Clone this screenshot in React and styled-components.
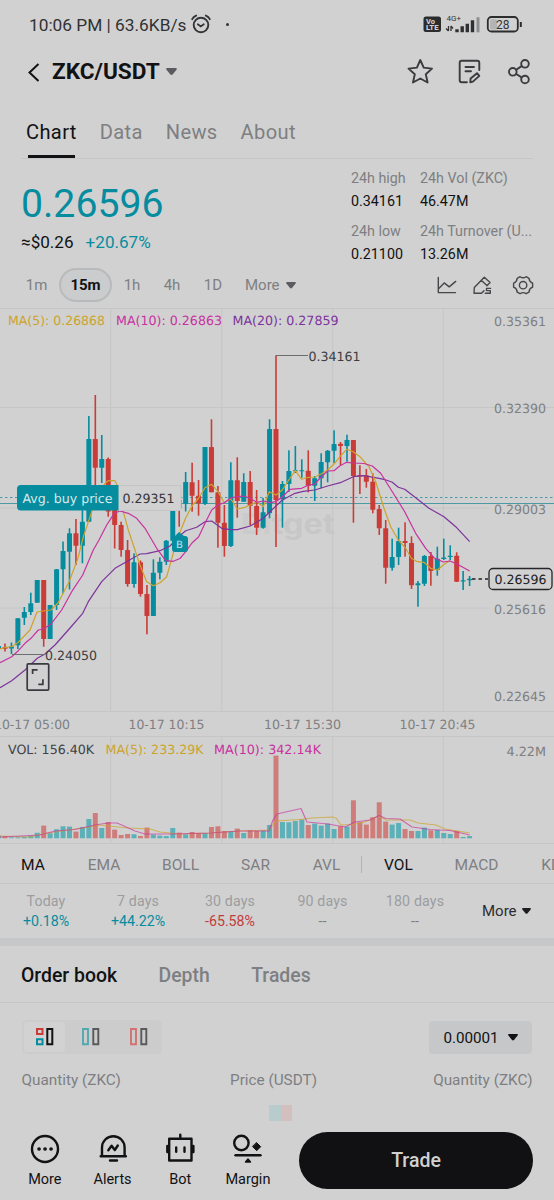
import styled, { createGlobalStyle } from 'styled-components';

const BG = '#d1d1d1';
const TEAL = '#068c9f';
const RED = '#ca3c37';
const GOLD = '#cda32c';
const PINK = '#c832a0';
const PURPLE = '#7c349c';
const MUTED = '#7e7f82';
const LINE = '#c6c6c7';

// [high, body top, body bottom, low, up?]
const CANDLES = [
  [644, 646, 649, 650, 1], [643.5, 647, 648.7, 651.5, 0], [642.5, 646.5, 648.5, 654, 1],
  [618, 618.3, 645.3, 649, 1], [607, 612, 617.7, 625, 1], [592.7, 603.3, 612, 615, 1],
  [580, 580, 602.7, 602.7, 1], [580, 580, 639, 646.7, 0], [605, 605, 639, 639, 1],
  [569, 569.3, 605, 610, 1], [541.5, 551, 569.3, 593.5, 1], [528.3, 533.3, 551.7, 589.5, 1],
  [519, 533.3, 545.7, 565, 0], [505, 521.7, 545.7, 563.3, 1], [416, 439, 521.7, 521.7, 1],
  [395, 439, 467.7, 490, 0], [435, 459, 467.7, 483, 1], [457.5, 459, 511.5, 516.7, 0],
  [510, 510, 525, 548.5, 0], [521.7, 525, 550, 556.7, 0], [540, 550, 584, 586.7, 0],
  [553.3, 562.3, 584, 587.7, 1], [560.5, 562.3, 594, 596.7, 0], [585, 594, 616, 634.3, 0],
  [559.3, 572.7, 616, 616, 1], [557.3, 561.7, 572.7, 579.3, 1], [540, 540.7, 561.7, 565, 1],
  [508, 510, 540.7, 544, 1], [490, 500, 508, 526.7, 0], [472, 482, 503.7, 511.5, 1],
  [462.7, 482.3, 495.7, 511.7, 0], [480, 495.7, 503.3, 515.7, 0], [447, 447, 504, 505, 1],
  [419.3, 447, 492.3, 492.3, 0], [486, 492.3, 522.7, 547.7, 0], [505, 522.7, 546, 556.7, 0],
  [462.3, 480.3, 546, 547, 1], [457.3, 480.3, 501, 517.7, 0], [473.3, 482, 501.7, 501.7, 1],
  [471, 482, 505.7, 525.7, 0], [490, 506, 527.7, 535, 0], [498, 512.3, 527.7, 528.7, 1],
  [419.3, 429, 513.3, 518.3, 1], [355.3, 429, 500, 547, 0], [481, 484, 499.3, 527.7, 1],
  [450.3, 471, 484, 492, 1], [446, 470.3, 471.3, 473, 1], [459.3, 470.3, 471.3, 477.7, 1],
  [450.3, 470.7, 485.7, 492.3, 0], [476, 478.3, 485.7, 501, 1], [453.3, 462, 478.3, 488.3, 1],
  [450, 450.7, 462.3, 482.3, 1], [430.3, 444, 450.7, 463.3, 1], [442, 443.7, 446, 465, 0],
  [434.7, 440, 446, 461.7, 1], [440, 440, 476, 522.7, 0], [465.3, 475, 476.5, 494, 0],
  [469, 475.3, 481.7, 487.7, 0], [473.3, 481.7, 509.7, 513.3, 0], [505, 509, 528.3, 535, 0],
  [520, 528.3, 567.7, 583.7, 0], [538.7, 557, 567.7, 570.7, 1], [527.7, 541, 557, 565, 1],
  [522.3, 541, 543, 556.7, 0], [536.3, 543, 585.3, 589, 0], [581, 583.3, 585.3, 606.7, 1],
  [555, 556, 583.7, 586, 1], [552, 556, 571, 585.7, 0], [546.7, 558.7, 570, 575.7, 1],
  [538.7, 557.5, 559, 560, 1], [545.3, 555.7, 557, 560, 1], [552.3, 555.7, 581.7, 582, 0],
  [571, 580.3, 581.5, 590, 1], [576, 578.7, 580.3, 586, 1],
];

const VOLUMES = [
  2.7, 2, 1, 1, 1.5, 2.6, 5.5, 12.7, 5, 9, 12, 11.7, 6.7, 11.3, 19.3, 25.3, 10.3, 16.3, 8.7, 3.3, 4.3,
  4, 2.3, 10.7, 3.7, 2.7, 2.3, 10.3, 5.7, 4, 6.3, 5.3, 5.3, 11.3, 12, 7.3, 7, 9.7, 5.3, 8.3, 7.3, 7.7,
  13.3, 82.7, 16.3, 16, 17.3, 18.7, 13.3, 14.7, 12.7, 14.7, 9.3, 12, 11.7, 38, 16, 13.7, 21, 36, 16.7,
  13.7, 15.3, 9.3, 7.3, 7.3, 10.7, 8, 8.3, 5.3, 4.3, 7.3, 1.3, 2.3,
];

const MA5 =
  '0,649 5,647.5 12,646.5 18,642.5 30,630 37,612 43,611 51,610 58,603 69,582 78,558 83.3,537 91.7,511.7 98,495 105,483.3 108.3,480.7 115,480.7 117,485 123.3,511.7 128.3,530 140,565 146.7,581.7 153.3,585.7 160,582.7 166.7,576.7 173.3,553 180,532 185.7,518 192,506 198.7,498 205,487.7 211.7,484.3 218,491.7 224.3,502.7 230.7,498.7 237.3,509 243.7,507.7 250.3,505 256.7,501.7 263.3,506.7 269.3,491.7 276,495 282.3,490 288.7,480 295.3,470.7 301.7,479.3 308.3,477.3 314.7,477 321,474 327.7,470 334,464 340,456.7 346.7,449.3 353.3,451.7 360,456.7 365,462.5 369,466.7 375.7,481.7 384,508.3 390.7,526.7 398.3,540 405.7,548.3 411.3,558.3 417.3,561.7 424,562.3 430.7,568.3 437.3,570 443.3,565 450,560.5';
const MA10 =
  '0,662.7 11.7,656.7 18.3,650.7 25,643.3 31,638.3 38.3,630 43.3,629 50.7,624.3 61.7,610 71.7,591.7 82.7,575 93.3,550 99,540 106.7,525 114.3,513.3 120,511 128.3,513.3 136.7,518.3 145,528.3 156.7,548.3 165.7,560.7 173.3,561.3 180,558.5 185.7,551.7 192,543 198.7,536.7 205,523.3 211.7,510 218,505 224.3,502.7 230.7,498 237.3,496.7 243.7,496 250.3,498.3 256.7,502.3 263.3,501 270,502.7 276,501.7 282.3,496.7 290,489.3 301.7,488.3 307,485.7 314.7,484 321,477 327.7,471 334,470.7 340,465.7 346.7,462.3 353.3,463 364,463.5 372.3,466 380.7,473.3 392.3,491.7 404.7,511.7 415.7,533.3 425.7,548.3 434,557.7 443.3,562 450,561 457.3,564.3 469.7,571';
const MA20 =
  '0,687.7 11.7,680.7 25,670 37.3,658.3 45,654 55,645 68.3,630 82.7,613.3 88.3,601.7 101.7,581.7 115,568.3 128.3,560.7 140,554 146.7,553.7 160,550.7 170,546 180,535.5 185.7,530.7 196.7,527.3 205,521.7 211.7,521 221.7,528.3 230,529.7 237.3,529.7 250.3,526 263.3,518.3 270,511.7 282.3,500 295,493.3 303.3,491.3 314.7,490 327.7,486 340.3,482.7 353.3,476.7 363,475.7 374,477.3 384,479.3 392.3,482.3 398.3,487.3 404.7,489.3 415.7,497.7 429,508.3 444,516.7 455.7,526.7 469.7,541.7';
const VOL_MA5 =
  '0,836 30,837 42,834 55,832 75,829 90,827 98,825 108,826 118,827 128,828 150,829 160,832 180,834 210,833 240,831 269,830 276,821 300,819.5 312,818 332,817 336,818 341,825 352,824.5 365,822 379,816 386,820 410,820 418,823 436,825 445,829 469.7,833';
const VOL_MA10 =
  '0,837 40,835 55,831 75,829.5 95,825 108,823 117,823 124,826 135,831 145,834 170,834 210,833 240,831 269,831 273,820 277,814 301,808.5 307,822 328,824 345,827 355,822 370,820 379,815.5 386,818.5 400,819 412,827 430,829.5 450,830.5 469.7,835';

const VLINES = [110.7, 221.7, 332.7, 443.3];
const candleX = (i) => 276 + 6.453 * (i - 43);

const GlobalStyle = createGlobalStyle`
  * { box-sizing: border-box; }
  body {
    margin: 0;
    background: ${BG};
    font-family: Roboto, "Liberation Sans", sans-serif;
  }
`;

const PriceChart = () => (
  <Plot width="554" height="429" viewBox="0 308 554 429">
    {VLINES.map((x) => (
      <line key={x} x1={x} x2={x} y1="308" y2="711" stroke={LINE} />
    ))}
    {[308.5, 407.5, 508, 608, 711.5, 736.5].map((y) => (
      <line key={y} x1="0" x2={y > 408 && y < 700 ? 490 : 554} y1={y} y2={y} stroke={LINE} />
    ))}
    <Watermark x="241" y="533.5" textLength="94">
      <tspan fill="#cbcbcb">Bi</tspan>tget
    </Watermark>
    <line x1="0" x2="554" y1="497.5" y2="497.5" stroke="#4b9ba4" strokeDasharray="2.5 2.5" />
    <line x1="0" x2="554" y1="503.5" y2="503.5" stroke="#4b9ba4" />
    {CANDLES.map(([high, top, bottom, low, up], i) => (
      <g key={i} fill={up ? TEAL : RED}>
        <rect x={candleX(i) - 0.8} y={high} width="1.6" height={low - high} />
        <rect x={candleX(i) - 2.5} y={top} width="5" height={Math.max(bottom - top, 1)} rx="0.5" />
      </g>
    ))}
    <Curve points={MA20} stroke={PURPLE} />
    <Curve points={MA5} stroke={GOLD} />
    <Curve points={MA10} stroke={PINK} />
    <Label x="8" y="325" textLength="97" fill={GOLD}>MA(5): 0.26868</Label>
    <Label x="116" y="325" textLength="106" fill={PINK}>MA(10): 0.26863</Label>
    <Label x="232.5" y="325" textLength="106" fill={PURPLE}>MA(20): 0.27859</Label>
    <Label x="494" y="325.5" textLength="52">0.35361</Label>
    <Label x="494" y="413" textLength="52">0.32390</Label>
    <Label x="494" y="513.5" textLength="52">0.29003</Label>
    <Label x="494" y="613.5" textLength="52">0.25616</Label>
    <Label x="494" y="701" textLength="52">0.22645</Label>
    <path d="M276 355.5h32M12 654.5h33" stroke="#6d6e70" fill="none" />
    <Label x="308.5" y="360.8" textLength="52" fill="#3c3d40">0.34161</Label>
    <Label x="45" y="659.5" textLength="52" fill="#3c3d40">0.24050</Label>
    <path d="M118 485.5h61a2 2 0 0 1 2 2v21a2 2 0 0 1-2 2h-61z" fill={BG} stroke="#c4c4c4" />
    <path d="M21 485h97.5v25.5H21a4 4 0 0 1-4-4V489a4 4 0 0 1 4-4z" fill={TEAL} />
    <Label x="22.5" y="503" textLength="90" fill="#d9eaec">Avg. buy price</Label>
    <Label x="122.5" y="503" textLength="52" fill="#333437">0.29351</Label>
    <path d="M175 536l4-4 5 4h1a3 3 0 0 1 3 3v10a3 3 0 0 1-3 3h-10a3 3 0 0 1-3-3v-10a3 3 0 0 1 3-3z" fill={TEAL} />
    <Label x="176" y="548" textLength="7" size="10" fill="#c5e0e3">B</Label>
    <path d="M472 579h16" stroke="#222" strokeWidth="1.4" strokeDasharray="3.5 3" />
    <rect x="489" y="568.5" width="63" height="21" rx="4" fill={BG} stroke="#26272a" strokeWidth="1.3" />
    <Label x="494.5" y="584" textLength="52" fill="#1b1c1e">0.26596</Label>
    <rect x="27.2" y="663.8" width="21.5" height="26.3" rx="1" fill={BG} stroke="#3a3b40" strokeWidth="1.7" />
    <path d="M32.6 674v-4.2h5M38.3 684.3h4.6v-5" stroke="#3a3b40" strokeWidth="1.7" fill="none" />
    <Label x="-6" y="729" textLength="76">10-17 05:00</Label>
    <Label x="128.5" y="729" textLength="76">10-17 10:15</Label>
    <Label x="264" y="729" textLength="77">10-17 15:30</Label>
    <Label x="399.5" y="729" textLength="76">10-17 20:45</Label>
  </Plot>
);

const VolumeChart = () => (
  <Plot width="554" height="107" viewBox="0 737 554 107">
    {VLINES.map((x) => (
      <line key={x} x1={x} x2={x} y1="737" y2="843" stroke={LINE} />
    ))}
    <line x1="0" x2="554" y1="843.5" y2="843.5" stroke={LINE} />
    {VOLUMES.map((v, i) => (
      <rect key={i} x={candleX(i) - 2.5} y={838.3 - v} width="5" height={v} fill={CANDLES[i][4] ? '#5cb0b8' : '#cf7d7a'} />
    ))}
    <Curve points={VOL_MA5} stroke={GOLD} opacity="0.7" />
    <Curve points={VOL_MA10} stroke={PINK} opacity="0.65" />
    <Label x="8" y="754" textLength="86" fill="#404144">VOL: 156.40K</Label>
    <Label x="105.5" y="754" textLength="98" fill={GOLD}>MA(5): 233.29K</Label>
    <Label x="214" y="754" textLength="107" fill={PINK}>MA(10): 342.14K</Label>
    <Label x="506.5" y="756" textLength="39.5">4.22M</Label>
  </Plot>
);

const StatusIcons = () => (
  <Icon width="102" height="20" viewBox="422 14 102 20" fill="none">
    <rect x="423.5" y="16.5" width="17.5" height="15.5" rx="2.5" fill="#2b2c2e" />
    <Tiny x="426" y="23.8" size="7" textLength="9" fill={BG}>Vo</Tiny>
    <Tiny x="426" y="30.3" size="7" textLength="12.5" fill={BG}>LTE</Tiny>
    <Tiny x="446.5" y="21" size="7" textLength="14.5" fill="#333" $light>4G+</Tiny>
    <path d="M448.5 31v-5M451 26v5M446 28.5l2.5 2.5M453 28.5L451 26" stroke="#333" strokeWidth="1.3" />
    <path d="M457 32.3v-3M462.2 32.3v-6M467.3 32.3v-8.5M472.5 32.3v-12" stroke="#2f3032" strokeWidth="3.4" />
    <path d="M478 32.3v-15" stroke="#8e8e8f" strokeWidth="3" />
    <rect x="487.8" y="17" width="30" height="14.5" rx="3.6" stroke="#2c2d2f" strokeWidth="1.8" />
    <rect x="490" y="19.2" width="7" height="10.2" rx="1.5" fill="#b4b4b4" />
    <path d="M520.8 22v5" stroke="#2c2d2f" strokeWidth="2" />
    <Tiny x="496" y="28.7" size="12" textLength="13.5" fill="#333" $light>28</Tiny>
  </Icon>
);

const AlarmIcon = () => (
  <Icon width="20" height="20" viewBox="0 0 20 20" fill="none" stroke="#333436" strokeWidth="1.9" strokeLinecap="round">
    <circle cx="10" cy="11" r="7.3" />
    <path d="M6.8 10.2l3 2.2 3-2.2" strokeWidth="1.7" />
    <path d="M1.2 5.2Q2.5 2.6 5.2 1.6M18.8 5.2Q17.5 2.6 14.8 1.6" />
  </Icon>
);

const HeaderIcons = () => (
  <Icon width="126" height="28" viewBox="407 58 126 28" fill="none" stroke="#3a3b3e" strokeWidth="1.9" strokeLinejoin="round" strokeLinecap="round">
    <path d="M420.3 60l3.4 7.6 8.3 1-6.2 5.6 1.8 8.3-7.3-4-7.3 4 1.8-8.3-6.3-5.6 8.4-1z" />
    <path d="M479.3 70v-7.2a2 2 0 0 0-2-2h-15.6a2 2 0 0 0-2 2v17.4a2 2 0 0 0 2 2h5.2M465.5 67h8.5M465.5 71.3h5.5M470.3 82.2l.3-3.6 6.4-5.4 2.3 2.7-6.4 5.7z" />
    <g>
      <circle cx="525" cy="63.8" r="3.8" />
      <circle cx="512.8" cy="71.8" r="3.8" />
      <circle cx="525" cy="79.5" r="3.8" />
      <path d="M516.2 69.7l5.4-3.6M516.2 74l5.4 3.4" />
    </g>
  </Icon>
);

const ToolIcons = () => (
  <Icon width="98" height="20" viewBox="436 275 98 20" fill="none" stroke="#46474a" strokeWidth="1.4" strokeLinejoin="round" strokeLinecap="round">
    <path d="M438.3 277.5V292.6H455.5M438.8 288.5l5.4-5.6 5 4 6.5-5.5" />
    <path d="M481.5 293.3H474l.3-5.8 10-10.2 5.8 5.2-3.2 3.3M481.3 280.3l5.6 5.2M481.5 293.3l2.5-2.6" />
    <path d="M490.5 288.4h-4v2.2h3.8v2.6h-5" />
    <circle cx="523.1" cy="285.2" r="3.7" />
    <path d="M520.1 276.7q3 2.2 6 0l2.9 1.6q.3 3.7 3.6 4.9v4q-3.3 1.2-3.6 4.9l-2.9 1.6q-3-2.2-6 0l-2.9-1.6q-.3-3.7-3.6-4.9v-4q3.3-1.2 3.6-4.9z" />
  </Icon>
);

const Caret = ({ color = '#5b5c5f', size = 10 }) => (
  <Icon width={size} height={size * 0.65} viewBox="0 0 10 6.5">
    <path d="M.8 0h8.4q1.2.4.4 1.6L6 6q-1 .8-2 0L.4 1.6Q-.4.4.8 0z" fill={color} />
  </Icon>
);

const NAV = [
  {
    label: 'More',
    icon: (
      <>
        <circle cx="15" cy="15" r="13" />
        <path d="M9 15h.1M15 15h.1M21 15h.1" strokeWidth="3.6" />
      </>
    ),
  },
  {
    label: 'Alerts',
    icon: <path d="M4 22V13.5a11.3 11.3 0 0 1 22.6 0V22M2.7 22.2h25.2M12 26.5h7M10.3 16.3l3.3-4.5 3.2 4.2 3-4.5" />,
  },
  {
    label: 'Bot',
    icon: <path d="M4.2 4.8h22.3v21.7H4.2zM15.3 0.8v4M2.3 12v6M28.4 12v6M11.2 13.5v4.3M19.5 13.5v4.3" />,
  },
  {
    label: 'Margin',
    icon: (
      <>
        <circle cx="8.4" cy="9" r="7.2" />
        <path d="M2.5 21.3h25" />
        <path d="M23.7 8.7l4 4-4 4-4-4z" fill="#111214" strokeWidth="1" />
        <path d="M15 25l2.5 3h-5z" fill="#111214" strokeWidth="1.4" />
      </>
    ),
  },
];

const CHANGES = [
  ['Today', '+0.18%', TEAL, 92],
  ['7 days', '+44.22%', TEAL, 92],
  ['30 days', '-65.58%', '#c23c3c', 92],
  ['90 days', '--', MUTED, 93],
  ['180 days', '--', MUTED, 92],
];

export default function App() {
  return (
    <Screen>
      <GlobalStyle />
      <StatusBar>
        <Clock>10:06 PM | 63.6KB/s</Clock>
        <AlarmIcon />
        <Dot />
        <StatusIcons />
      </StatusBar>

      <Header>
        <Icon width="12" height="20" viewBox="0 0 12 20" fill="none" stroke="#111214" strokeWidth="2">
          <path d="M10.5 2L1.5 10.5l9 8.5" />
        </Icon>
        <Pair>ZKC/USDT</Pair>
        <Caret size={11} />
        <HeaderIcons />
      </Header>

      <Tabs>
        <Tab $active>Chart</Tab>
        <Tab>Data</Tab>
        <Tab>News</Tab>
        <Tab>About</Tab>
      </Tabs>

      <Summary>
        <div>
          <Price>0.26596</Price>
          <PriceSub>
            ≈$0.26 <Gain>+20.67%</Gain>
          </PriceSub>
        </div>
        <Stats>
          <Stat><span>24h high</span><b>0.34161</b></Stat>
          <Stat><span>24h Vol (ZKC)</span><b>46.47M</b></Stat>
          <Stat><span>24h low</span><b>0.21100</b></Stat>
          <Stat><span>24h Turnover (U...</span><b>13.26M</b></Stat>
        </Stats>
      </Summary>

      <Intervals>
        <Interval $w={37}>1m</Interval>
        <Interval $w={53} $active>15m</Interval>
        <Interval $w={40}>1h</Interval>
        <Interval $w={40}>4h</Interval>
        <Interval $w={42}>1D</Interval>
        <MoreInterval>
          More <Caret />
        </MoreInterval>
        <ToolIcons />
      </Intervals>

      <PriceChart />
      <VolumeChart />

      <Indicators>
        <Indicator $w={66} $active>MA</Indicator>
        <Indicator $w={76}>EMA</Indicator>
        <Indicator $w={77}>BOLL</Indicator>
        <Indicator $w={73}>SAR</Indicator>
        <Indicator $w={69}>AVL</Indicator>
        <Divider />
        <Indicator $w={73} $active>VOL</Indicator>
        <Indicator $w={83}>MACD</Indicator>
        <Indicator $w={75}>KDJ</Indicator>
      </Indicators>

      <Changes>
        {CHANGES.map(([label, value, color, w]) => (
          <Change key={label} $w={w} $color={color}>
            <span>{label}</span>
            <b>{value}</b>
          </Change>
        ))}
        <MoreChanges>
          More <Caret color="#1d1e20" size={9} />
        </MoreChanges>
      </Changes>
      <Band />

      <BookTabs>
        <BookTab $active>Order book</BookTab>
        <BookTab>Depth</BookTab>
        <BookTab>Trades</BookTab>
      </BookTabs>

      <BookTools>
        <Modes>
          <Mode $active>
            <Icon width="18" height="18" viewBox="0 0 18 18" fill="none" strokeWidth="2">
              <path d="M1 1h5.5v5H1z" stroke={RED} />
              <path d="M1 11.3h5.5v5H1z" stroke={TEAL} />
              <path d="M11.3 1h5v15.3h-5z" stroke="#111214" />
            </Icon>
          </Mode>
          <Mode>
            <Icon width="18" height="18" viewBox="0 0 18 18" fill="none" strokeWidth="1.9">
              <path d="M1 1h5v15.3H1z" stroke="#52a8b1" />
              <path d="M11.3 1h5v15.3h-5z" stroke="#58595b" />
            </Icon>
          </Mode>
          <Mode>
            <Icon width="18" height="18" viewBox="0 0 18 18" fill="none" strokeWidth="1.9">
              <path d="M1 1h5v15.3H1z" stroke="#d27270" />
              <path d="M11.3 1h5v15.3h-5z" stroke="#58595b" />
            </Icon>
          </Mode>
        </Modes>
        <Step>
          0.00001 <Caret color="#111214" />
        </Step>
      </BookTools>

      <BookHead>
        <span>Quantity (ZKC)</span>
        <span>Price (USDT)</span>
        <span>Quantity (ZKC)</span>
      </BookHead>
      <BookRow>
        <Cell $w={200}>500.06</Cell>
        <Cell $w={52} $color="#8ab4b9">0.26575</Cell>
        <Fill $color="#b8cccd" $w={12} />
        <Fill $color="#d3c0be" $w={11} />
        <Cell $w={205} $color="#b9a5a4">0.26596</Cell>
        <Cell $w={40}>3.50K</Cell>
      </BookRow>

      <BottomBar>
        {NAV.map(({ label, icon }) => (
          <NavItem key={label}>
            <Icon width="30" height="30" viewBox="0 0 30 30" fill="none" stroke="#111214" strokeWidth="2.4" strokeLinecap="round" strokeLinejoin="round">
              {icon}
            </Icon>
            {label}
          </NavItem>
        ))}
        <TradeButton>Trade</TradeButton>
      </BottomBar>
    </Screen>
  );
}

const Screen = styled.div`
  display: flex;
  flex-direction: column;
  width: 554px;
  height: 1200px;
  overflow: hidden;
  background: ${BG};
  color: #111214;
  > * {
    flex: none;
  }
`;
const Icon = styled.svg`
  display: block;
  flex: none;
  overflow: visible;
`;
const Plot = styled.svg`
  display: block;
`;
const Label = styled.text.attrs((p) => ({ fill: p.fill || MUTED, lengthAdjust: 'spacingAndGlyphs' }))`
  font-family: "DejaVu Sans", sans-serif;
  font-size: ${(p) => p.size || 12.7}px;
  text-rendering: geometricPrecision;
`;
const Tiny = styled.text.attrs({ lengthAdjust: 'spacingAndGlyphs' })`
  font-size: ${(p) => p.size}px;
  font-weight: ${(p) => (p.$light ? 400 : 800)};
`;
const Watermark = styled.text.attrs({ lengthAdjust: 'spacingAndGlyphs' })`
  font-family: Inter, sans-serif;
  font-size: 28px;
  font-weight: 700;
  fill: #c7c7c8;
`;
const Curve = styled.polyline`
  fill: none;
  stroke-width: 1.2;
  stroke-linejoin: round;
`;
const StatusBar = styled.div`
  display: flex;
  align-items: center;
  height: 48px;
  padding: 0 30px 0 29px;
  > svg:last-child {
    margin-left: auto;
  }
`;
const Clock = styled.div`
  width: 162px;
  margin-top: 1px;
  font-size: 17.3px;
  line-height: 20px;
  color: #303133;
  white-space: nowrap;
`;
const Dot = styled.i`
  width: 3px;
  height: 3px;
  margin-left: 15px;
  border-radius: 50%;
  background: #333;
`;
const Header = styled.div`
  display: flex;
  align-items: center;
  height: 48px;
  padding: 0 21px 0 28px;
  > svg:last-child {
    margin-left: auto;
  }
`;
const Pair = styled.h1`
  margin: 0 6px 0 12px;
  font-size: 22.6px;
  line-height: 26px;
  font-weight: 700;
`;
const Tabs = styled.div`
  display: flex;
  gap: 23px;
  height: 63px;
  margin: 0 21px;
  padding-left: 5px;
  border-bottom: 1px solid ${LINE};
`;
const Tab = styled.div`
  display: flex;
  flex-direction: column;
  justify-content: space-between;
  padding-top: 22px;
  font-size: 20.1px;
  line-height: 28px;
  letter-spacing: 0.35px;
  color: ${(p) => (p.$active ? '#111214' : MUTED)};
  &::after {
    content: '';
    height: 3px;
    margin: 0 2px;
    background: ${(p) => (p.$active ? '#111214' : 'transparent')};
  }
`;
const Summary = styled.div`
  display: flex;
  justify-content: space-between;
  height: 108px;
  padding: 9px 21px 0;
`;
const Price = styled.div`
  margin-top: 12px;
  font-size: 39.2px;
  line-height: 48px;
  color: ${TEAL};
`;
const PriceSub = styled.div`
  display: flex;
  gap: 12px;
  margin-top: 4px;
  font-size: 17.1px;
  line-height: 20px;
`;
const Gain = styled.span`
  color: ${TEAL};
`;
const Stats = styled.div`
  display: grid;
  grid-template-columns: 69px 113px;
  grid-auto-rows: 53px;
`;
const Stat = styled.div`
  display: flex;
  flex-direction: column;
  gap: 3px;
  font-size: 14.3px;
  line-height: 20px;
  white-space: nowrap;
  span {
    color: ${MUTED};
  }
  b {
    font-weight: 400;
  }
`;
const Intervals = styled.div`
  display: flex;
  align-items: center;
  height: 41px;
  padding: 0 20px 5px 18px;
  > svg:last-child {
    margin-left: auto;
  }
`;
const Interval = styled.div`
  width: ${(p) => p.$w}px;
  height: 34px;
  margin-left: ${(p) => (p.$active ? 4 : 0)}px;
  border: 2px solid ${(p) => (p.$active ? '#b9babb' : 'transparent')};
  border-radius: 17px;
  background: ${(p) => (p.$active ? '#cbcccd' : 'transparent')};
  color: ${(p) => (p.$active ? '#111214' : MUTED)};
  font-size: 15px;
  font-weight: ${(p) => (p.$active ? 700 : 400)};
  line-height: 30px;
  text-align: center;
`;
const MoreInterval = styled.div`
  display: flex;
  align-items: center;
  gap: 6px;
  margin-left: 11px;
  font-size: 15px;
  color: ${MUTED};
`;
const Indicators = styled.div`
  display: flex;
  align-items: center;
  height: 40px;
  padding-top: 2px;
  overflow: hidden;
  border-bottom: 1px solid ${LINE};
`;
const Indicator = styled.div`
  flex: none;
  width: ${(p) => p.$w}px;
  font-size: 15.5px;
  color: ${(p) => (p.$active ? '#111214' : MUTED)};
  text-align: center;
`;
const Divider = styled.i`
  flex: none;
  width: 1px;
  height: 17px;
  background: #b3b3b4;
`;
const Changes = styled.div`
  display: flex;
  height: 54px;
`;
const Change = styled.div`
  width: ${(p) => p.$w}px;
  padding-top: 7px;
  font-size: 14.2px;
  line-height: 20px;
  text-align: center;
  span {
    display: block;
    color: #9c9da0;
    letter-spacing: 0.15px;
  }
  b {
    font-weight: 400;
    color: ${(p) => p.$color};
  }
`;
const MoreChanges = styled.div`
  display: flex;
  align-items: center;
  gap: 5px;
  margin-left: 21px;
  font-size: 15px;
  color: #2c2d30;
`;
const Band = styled.div`
  height: 8px;
  background: #c6c7c9;
`;
const BookTabs = styled.div`
  display: flex;
  gap: 41.5px;
  height: 57px;
  padding: 0 21px;
  border-bottom: 1px solid ${LINE};
  line-height: 59px;
`;
const BookTab = styled.div`
  font-size: 19.4px;
  font-weight: 500;
  color: ${(p) => (p.$active ? '#111214' : MUTED)};
`;
const BookTools = styled.div`
  display: flex;
  justify-content: space-between;
  padding: 17px 22px 0;
`;
const Modes = styled.div`
  display: flex;
  width: 140px;
  height: 34px;
  padding: 2px;
  border-radius: 5px;
  background: #cccccd;
`;
const Mode = styled.div`
  display: flex;
  flex: none;
  align-items: center;
  justify-content: center;
  width: ${(p) => (p.$active ? 41 : 48)}px;
  padding-left: ${(p) => (p.$active ? 0 : 3)}px;
  border-radius: 4px;
  background: ${(p) => (p.$active ? '#d2d2d2' : 'transparent')};
`;
const Step = styled.div`
  display: flex;
  align-items: center;
  justify-content: center;
  gap: 9px;
  width: 103px;
  height: 33px;
  margin-top: 1px;
  border-radius: 4px;
  background: #c6c7c9;
  font-size: 15.2px;
`;
const BookHead = styled.div`
  display: flex;
  justify-content: space-between;
  padding: 16px 21.5px 0;
  font-size: 15.3px;
  line-height: 20px;
  color: ${MUTED};
  > :nth-child(2) {
    margin-right: 7px;
  }
`;
const BookRow = styled.div`
  display: flex;
  height: 16px;
  margin-top: 15px;
  padding-left: 17px;
  overflow: hidden;
`;
const Cell = styled.div`
  flex: none;
  width: ${(p) => p.$w}px;
  padding-top: 10px;
  font-size: 15px;
  line-height: 28px;
  color: ${(p) => p.$color || '#9a9b9d'};
`;
const Fill = styled.div`
  flex: none;
  width: ${(p) => p.$w}px;
  background: ${(p) => p.$color};
`;
const BottomBar = styled.div`
  display: flex;
  height: 79px;
  padding: 11px 21px 0 11px;
`;
const NavItem = styled.div`
  display: flex;
  flex-direction: column;
  align-items: center;
  gap: 7px;
  width: 67.7px;
  padding-top: 2px;
  font-size: 14.5px;
  line-height: 18px;
`;
const TradeButton = styled.button`
  width: 234px;
  height: 57px;
  margin-left: auto;
  border: 0;
  border-radius: 29px;
  background: #111113;
  color: #d1d1d1;
  font: 500 19.5px Roboto, sans-serif;
`;
